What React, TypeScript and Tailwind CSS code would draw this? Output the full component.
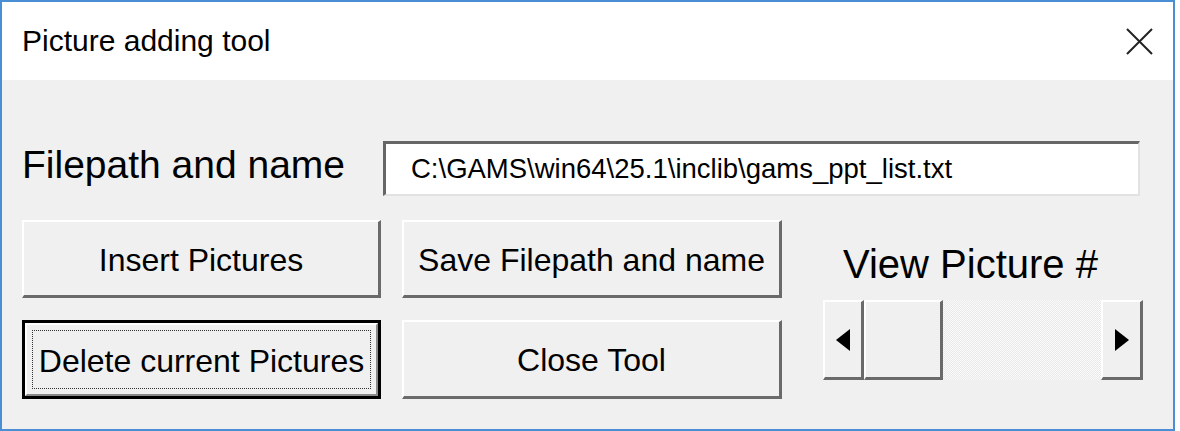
import React from "react";

const bevel =
  "border-t-2 border-l-2 border-t-white border-l-white border-b-[3px] border-r-[3px] border-b-[#6a6a6a] border-r-[#6a6a6a] bg-[#f0f0f0]";

function Btn({ label, className = "" }: { label: string; className?: string }) {
  return (
    <div className={`flex items-center justify-center ${bevel} ${className}`}>
      <span className="text-[32px] leading-none text-black mt-[2px]">{label}</span>
    </div>
  );
}

export default function App() {
  return (
    <div className="w-[1180px] h-[431px] bg-white font-['Liberation_Sans',Arial,sans-serif]">
      <div className="w-[1175px] h-[431px] border-2 border-[#4a8ed6] flex flex-col">
        {/* Title bar */}
        <div className="h-[78px] bg-white flex items-center pl-[20px]">
          <span className="text-[30px] leading-none text-black">Picture adding tool</span>
          <svg
            className="ml-auto mr-[20px]"
            width="27"
            height="27"
            viewBox="0 0 27 27"
          >
            <path d="M1 1 L26 26 M26 1 L1 26" stroke="#222" strokeWidth="2" fill="none" />
          </svg>
        </div>
        {/* Body */}
        <div className="flex-1 bg-[#f0f0f0] pl-[20px] pt-[61px] flex flex-col">
          <div className="flex items-center h-[55px]">
            <div className="w-[361px] -mt-[8px]">
              <span className="text-[39px] leading-none text-black">Filepath and name</span>
            </div>
            <div className="w-[757px] h-[55px] bg-white border-t-[3px] border-l-[3px] border-t-[#666] border-l-[#666] border-r-2 border-b-2 border-r-[#e2e2e2] border-b-[#e2e2e2] flex items-center pl-[25px]">
              <span className="text-[27.5px] leading-none text-black">
                C:\GAMS\win64\25.1\inclib\gams_ppt_list.txt
              </span>
            </div>
          </div>
          <div className="mt-[24px] flex">
            <div className="w-[359px] flex flex-col gap-[22px]">
              <Btn label="Insert Pictures" className="h-[78px]" />
              <div className="h-[79px] border-[3px] border-black flex">
                <div className="flex-1 flex border-t-2 border-l-2 border-t-white border-l-white border-b-2 border-r-2 border-b-[#8a8a8a] border-r-[#8a8a8a] bg-[#f0f0f0]">
                  <div className="flex-1 m-[5px] border border-dotted border-[#333] flex items-center justify-center">
                    <span className="text-[32px] leading-none text-black mt-[2px]">Delete current Pictures</span>
                  </div>
                </div>
              </div>
            </div>
            <div className="w-[380px] ml-[21px] flex flex-col gap-[22px]">
              <Btn label="Save Filepath and name" className="h-[78px]" />
              <Btn label="Close Tool" className="h-[79px]" />
            </div>
            <div className="w-[320px] ml-[41px] flex flex-col pt-[24px]">
              <div className="h-[39px] pl-[20px] flex items-center">
                <span className="text-[40px] leading-none text-black">View Picture #</span>
              </div>
              <div className="mt-[17px] h-[80px] flex">
                <div className={`w-[41px] flex items-center justify-center ${bevel}`}>
                  <svg width="14" height="22" viewBox="0 0 14 22">
                    <polygon points="14,0 14,22 0,11" fill="#000" />
                  </svg>
                </div>
                <div className={`w-[79px] ${bevel}`} />
                <div className="flex-1 bg-[repeating-conic-gradient(#fbfbfb_0%_25%,#e9e9e9_0%_50%)] bg-[length:2px_2px]" />
                <div className={`w-[42px] flex items-center justify-center ${bevel}`}>
                  <svg width="14" height="22" viewBox="0 0 14 22">
                    <polygon points="0,0 0,22 14,11" fill="#000" />
                  </svg>
                </div>
              </div>
            </div>
          </div>
        </div>
      </div>
    </div>
  );
}
